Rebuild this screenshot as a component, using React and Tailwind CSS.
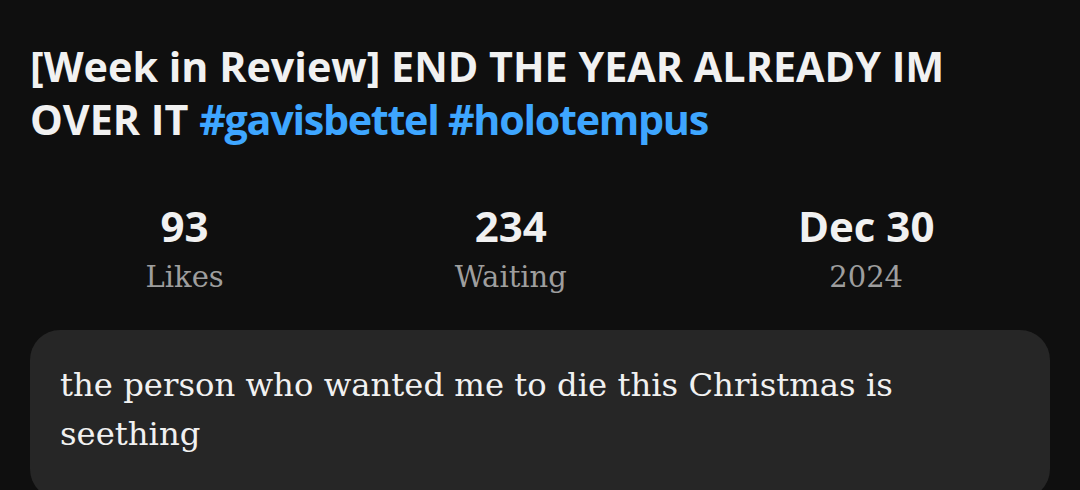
const stats = [
  { value: '93', label: 'Likes' },
  { value: '234', label: 'Waiting' },
  { value: 'Dec 30', label: '2024' },
];

export default function App() {
  return (
    <div className="min-h-screen bg-[#0f0f0f] px-[30px] pt-[40px]">
      <h1 className="max-w-[960px] font-['Open_Sans',sans-serif] text-[41.3px] font-bold leading-[53px] text-[#f1f1f1]">
        [Week in Review] END THE YEAR ALREADY IM OVER IT{' '}
        <span className="tracking-[-1.3px] text-[#3ea6ff]">#gavisbettel #holotempus</span>
      </h1>

      {/* Stats */}
      <div className="mt-[57px] flex justify-around">
        {stats.map((s) => (
          <div key={s.label} className="flex flex-col items-center">
            <div className="font-['Open_Sans',sans-serif] text-[42px] font-bold leading-[46px] text-[#f1f1f1]">
              {s.value}
            </div>
            <div className="mt-[8px] font-['DejaVu_Serif',serif] text-[29px] leading-[40px] text-[#9e9e9e]">
              {s.label}
            </div>
          </div>
        ))}
      </div>

      {/* Description */}
      <div className="mt-[33px] rounded-[30px] bg-[#262626] px-[30px] pt-[31px] pb-[40px]">
        <p className="max-w-[880px] font-['DejaVu_Serif',serif] text-[32.3px] leading-[49px] text-[#f1f1f1]">
          the person who wanted me to die this Christmas is seething
        </p>
      </div>
    </div>
  );
}
